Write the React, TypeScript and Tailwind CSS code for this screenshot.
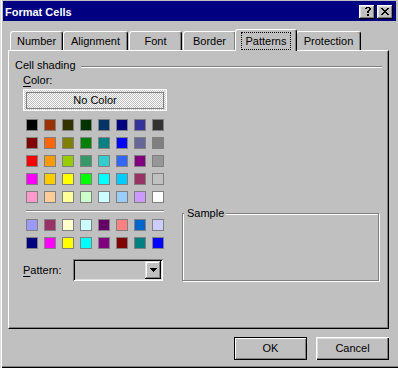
import React from 'react';

const rows1 = [
  ['#000000', '#993300', '#333300', '#003300', '#003366', '#000080', '#333399', '#333333'],
  ['#800000', '#ff6600', '#808000', '#008000', '#008080', '#0000ff', '#666699', '#808080'],
  ['#ff0000', '#ff9900', '#99cc00', '#339966', '#33cccc', '#3366ff', '#800080', '#969696'],
  ['#ff00ff', '#ffcc00', '#ffff00', '#00ff00', '#00ffff', '#00ccff', '#993366', '#c0c0c0'],
  ['#ff99cc', '#ffcc99', '#ffff99', '#ccffcc', '#ccffff', '#99ccff', '#cc99ff', '#ffffff'],
];
const rows2 = [
  ['#9999ff', '#993366', '#ffffcc', '#ccffff', '#660066', '#ff8080', '#0066cc', '#ccccff'],
  ['#000080', '#ff00ff', '#ffff00', '#00ffff', '#800080', '#800000', '#008080', '#0000ff'],
];

function Pix({ rows }: { rows: string[] }) {
  const w = rows[0].length;
  const h = rows.length;
  return (
    <svg width={w} height={h} viewBox={`0 0 ${w} ${h}`} shapeRendering="crispEdges">
      {rows.flatMap((r, y) =>
        r.split('').map((ch, x) =>
          ch === 'X' ? <rect key={`${x}-${y}`} x={x} y={y} width={1} height={1} fill="#000" /> : null
        )
      )}
    </svg>
  );
}

const helpGlyph = [
  '.XXXX.',
  'XX..XX',
  '....XX',
  '...XX.',
  '..XX..',
  '..XX..',
  '......',
  '..XX..',
  '..XX..',
];
const closeGlyph = [
  'XX....XX',
  '.XX..XX.',
  '..XXXX..',
  '...XX...',
  '..XXXX..',
  '.XX..XX.',
  'XX....XX',
];
const arrowGlyph = ['XXXXXXX', '.XXXXX.', '..XXX..', '...X...'];

function Grid({ rows }: { rows: string[][] }) {
  return (
    <div className="grid grid-cols-[repeat(8,12px)] gap-[6px]">
      {rows.flat().map((c, i) => (
        <div key={i} className="w-[12px] h-[12px] border border-[#808080]" style={{ backgroundColor: c }} />
      ))}
    </div>
  );
}

const tabs = [
  { label: 'Number', cls: 'w-[53px] ml-0' },
  { label: 'Alignment', cls: 'w-[65px] ml-0' },
  { label: 'Font', cls: 'w-[53px] ml-[1px]' },
  { label: 'Border', cls: 'w-[53px] ml-[1px]' },
  { label: 'Patterns', cls: 'w-[62px] -ml-[1px]', selected: true },
  { label: 'Protection', cls: 'w-[65px] -ml-[1px]' },
];

export default function App() {
  return (
    <div className="w-[398px] h-[368px] overflow-hidden bg-[#c0c0c0] pl-[3px] pr-[2px] pt-[1px] flex flex-col text-black text-[11px] leading-[13px] font-['Liberation_Sans',Arial,sans-serif] shadow-[inset_1px_0_#dfdfdf,inset_2px_0_#fff,inset_0_-1px_#000,inset_0_-2px_#808080]">
      {/* Title bar */}
      <div className="h-[20px] shrink-0 bg-[#000080] flex items-center justify-between pl-[2px] pr-[3px] pt-[2px]">
        <span className="text-white font-bold text-[11px] leading-[13px]">Format Cells</span>
        <div className="flex gap-[2px]">
          <div className="w-[16px] h-[14px] bg-[#c0c0c0] flex items-start justify-center pt-[2px] pl-[1px] shadow-[inset_-1px_-1px_#000,inset_1px_1px_#fff,inset_-2px_-2px_#808080,inset_2px_2px_#dfdfdf]">
            <Pix rows={helpGlyph} />
          </div>
          <div className="w-[16px] h-[14px] bg-[#c0c0c0] flex items-start justify-center pt-[3px] shadow-[inset_-1px_-1px_#000,inset_1px_1px_#fff,inset_-2px_-2px_#808080,inset_2px_2px_#dfdfdf]">
            <Pix rows={closeGlyph} />
          </div>
        </div>
      </div>

      {/* Tabs */}
      <div className="mt-[8px] pl-[7px] flex items-end h-[21px] shrink-0">
        {tabs.map((t) =>
          t.selected ? (
            <div
              key={t.label}
              className={`${t.cls} relative z-10 h-[22px] -mb-[1px] bg-[#c0c0c0] border-l border-t border-white border-r border-r-black shadow-[inset_-1px_0_#808080] rounded-t-[3px] flex justify-center pt-[2px]`}
            >
              <span className="border border-dotted border-black px-[4px] pt-[1px] leading-[15px] h-[18px]">{t.label}</span>
            </div>
          ) : (
            <div
              key={t.label}
              className={`${t.cls} h-[19px] border-l border-t border-white border-r border-r-black shadow-[inset_-1px_0_#808080] rounded-t-[3px] flex justify-center pt-[2px] leading-[15px]`}
            >
              {t.label}
            </div>
          )
        )}
      </div>

      {/* Panel */}
      <div className="ml-[5px] w-[381px] h-[279px] shrink-0 border border-white border-r-black border-b-black shadow-[inset_-1px_-1px_#808080] flex flex-col">
        <div className="pt-[8px] pl-[6px] pr-[6px] flex items-start">
          <span className="leading-[13px]">Cell shading</span>
          <div className="flex-1 ml-[5px] mt-[7px] h-[2px] border-t border-t-[#808080] border-b border-b-white" />
        </div>

        <div className="pl-[14px] flex items-end">
          <div className="w-[144px] flex flex-col">
            <div className="mt-[2px] leading-[13px]">
              <span className="underline underline-offset-[2px]">C</span>olor:
            </div>
            <div className="mt-[2px] h-[22px] w-[144px] border border-white bg-[image:repeating-conic-gradient(#ffffff_0%_25%,#c0c0c0_0%_50%)] bg-[length:2px_2px] pt-[2px] pb-[1px] px-[2px] flex">
              <div className="flex-1 border border-[#808080] flex items-center justify-center">No Color</div>
            </div>
            <div className="mt-[8px] ml-[3px]">
              <Grid rows={rows1} />
            </div>
            <div className="mt-[7px] ml-[3px] w-[138px] h-[2px] border-t border-t-[#808080] border-b border-b-white" />
            <div className="mt-[7px] ml-[3px]">
              <Grid rows={rows2} />
            </div>
            <div className="mt-[10px] w-[140px] flex items-center justify-between">
              <span>
                <span className="underline underline-offset-[2px]">P</span>attern:
              </span>
              <div className="w-[90px] h-[22px] flex justify-end p-[2px] bg-[#c0c0c0] shadow-[inset_1px_1px_#808080,inset_-1px_-1px_#fff,inset_2px_2px_#000,inset_-2px_-2px_#dfdfdf]">
                <div className="w-[16px] h-[18px] bg-[#c0c0c0] flex items-center justify-center shadow-[inset_-1px_-1px_#000,inset_1px_1px_#dfdfdf,inset_-2px_-2px_#808080,inset_2px_2px_#fff]">
                  <Pix rows={arrowGlyph} />
                </div>
              </div>
            </div>
          </div>

          <div className="relative ml-[15px] w-[197px] h-[68px] border border-[#808080] shadow-[1px_1px_0_#fff,inset_1px_1px_0_#fff]">
            <span className="absolute left-[1px] top-[-7px] bg-[#c0c0c0] pl-[3px] pr-[2px] leading-[13px]">Sample</span>
          </div>
        </div>
      </div>

      {/* Buttons */}
      <div className="mt-[8px] mr-[7px] flex justify-end gap-[9px]">
        <button className="w-[73px] h-[23px] bg-[#c0c0c0] border border-black shadow-[inset_1px_1px_#fff,inset_-1px_-1px_#808080] flex items-center justify-center text-[11px] leading-[13px]">
          OK
        </button>
        <button className="w-[73px] h-[23px] bg-[#c0c0c0] shadow-[inset_1px_1px_#fff,inset_-1px_-1px_#000,inset_-2px_-2px_#808080,inset_2px_2px_#dfdfdf] flex items-center justify-center text-[11px] leading-[13px]">
          Cancel
        </button>
      </div>
    </div>
  );
}
